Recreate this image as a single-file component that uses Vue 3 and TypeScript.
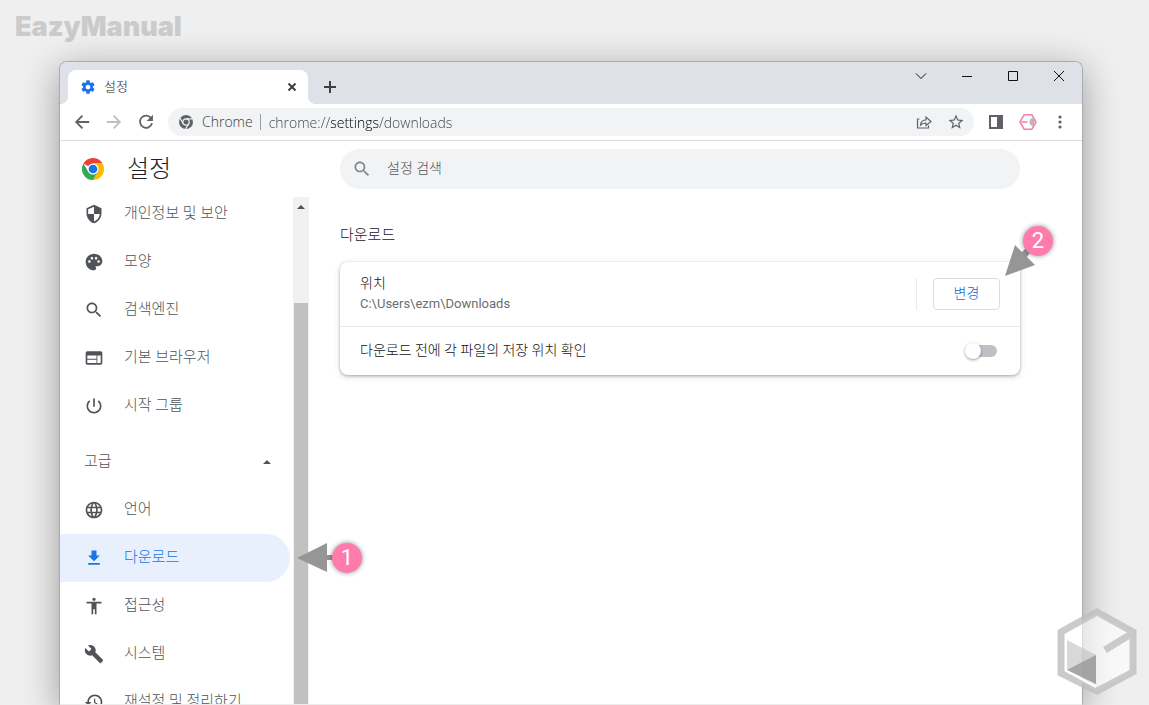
<script setup lang="ts">
import { ref } from 'vue'

interface NavItem {
  label: string
  icon: string
  active?: boolean
}

const basic: NavItem[] = [
  {
    label: '개인정보 및 보안',
    icon: 'M12 1L3 5v6c0 5.55 3.84 10.74 9 12 5.16-1.26 9-6.45 9-12V5l-9-4zm0 10.99h7c-.53 4.12-3.28 7.79-7 8.94V12H5V6.3l7-3.11v8.8z',
  },
  {
    label: '모양',
    icon: 'M12 2C6.49 2 2 6.49 2 12s4.49 10 10 10c1.38 0 2.5-1.12 2.5-2.5 0-.61-.23-1.2-.64-1.67-.08-.1-.13-.21-.13-.33 0-.28.22-.5.5-.5H16c3.31 0 6-2.69 6-6 0-4.96-4.49-9-10-9zm-5.5 11c-.83 0-1.5-.67-1.5-1.5S5.67 10 6.5 10s1.5.67 1.5 1.5S7.33 13 6.5 13zm3-4C8.67 9 8 8.33 8 7.5S8.67 6 9.5 6s1.5.67 1.5 1.5S10.33 9 9.5 9zm5 0c-.83 0-1.5-.67-1.5-1.5S13.67 6 14.5 6s1.5.67 1.5 1.5S15.33 9 14.5 9zm3 4c-.83 0-1.5-.67-1.5-1.5s.67-1.5 1.5-1.5 1.5.67 1.5 1.5-.67 1.5-1.5 1.5z',
  },
  {
    label: '검색엔진',
    icon: 'M15.5 14h-.79l-.28-.27C15.41 12.59 16 11.11 16 9.5 16 5.91 13.09 3 9.5 3S3 5.91 3 9.5 5.91 16 9.5 16c1.61 0 3.09-.59 4.23-1.57l.27.28v.79l5 4.99L20.49 19l-4.99-5zm-6 0C7.01 14 5 11.99 5 9.5S7.01 5 9.5 5 14 7.01 14 9.5 11.99 14 9.5 14z',
  },
  {
    label: '기본 브라우저',
    icon: 'M20 4H4c-1.1 0-1.99.9-1.99 2L2 18c0 1.1.9 2 2 2h16c1.1 0 2-.9 2-2V6c0-1.1-.9-2-2-2zm-5 14H4v-4h11v4zm0-5H4V9h11v4zm5 5h-4V9h4v9z',
  },
  {
    label: '시작 그룹',
    icon: 'M13 3h-2v10h2V3zm4.83 2.17l-1.42 1.42C17.99 7.86 19 9.81 19 12c0 3.87-3.13 7-7 7s-7-3.13-7-7c0-2.19 1.01-4.14 2.58-5.42L6.17 5.17C4.23 6.82 3 9.26 3 12c0 4.97 4.03 9 9 9s9-4.03 9-9c0-2.74-1.23-5.18-3.17-6.83z',
  },
]

const advanced: NavItem[] = [
  {
    label: '언어',
    icon: 'M11.99 2C6.47 2 2 6.48 2 12s4.47 10 9.99 10C17.52 22 22 17.52 22 12S17.52 2 11.99 2zm6.93 6h-2.95c-.32-1.25-.78-2.45-1.38-3.56 1.84.63 3.37 1.91 4.33 3.56zM12 4.04c.83 1.2 1.48 2.53 1.91 3.96h-3.82c.43-1.43 1.08-2.76 1.91-3.96zM4.26 14C4.1 13.36 4 12.69 4 12s.1-1.36.26-2h3.38c-.08.66-.14 1.32-.14 2s.06 1.34.14 2H4.26zm.82 2h2.95c.32 1.25.78 2.45 1.38 3.56-1.84-.63-3.37-1.9-4.33-3.56zm2.95-8H5.08c.96-1.66 2.49-2.93 4.33-3.56C8.81 5.55 8.35 6.75 8.03 8zM12 19.96c-.83-1.2-1.48-2.53-1.91-3.96h3.82c-.43 1.43-1.08 2.76-1.91 3.96zM14.34 14H9.66c-.09-.66-.16-1.32-.16-2s.07-1.35.16-2h4.68c.09.65.16 1.32.16 2s-.07 1.34-.16 2zm.25 5.56c.6-1.11 1.06-2.31 1.38-3.56h2.95c-.96 1.65-2.49 2.93-4.33 3.56zM16.36 14c.08-.66.14-1.32.14-2s-.06-1.34-.14-2h3.38c.16.64.26 1.31.26 2s-.1 1.36-.26 2h-3.38z',
  },
  { label: '다운로드', icon: 'M19 9h-4V3H9v6H5l7 7 7-7zM5 18v2h14v-2H5z', active: true },
  {
    label: '접근성',
    icon: 'M12 2c1.1 0 2 .9 2 2s-.9 2-2 2-2-.9-2-2 .9-2 2-2zm9 7h-6v13h-2v-6h-2v6H9V9H3V7h18v2z',
  },
  {
    label: '시스템',
    icon: 'M22.7 19l-9.1-9.1c.9-2.3.4-5-1.5-6.9-2-2-5-2.4-7.4-1.3L9 6 6 9 1.6 4.7C.4 7.1.9 10.1 2.9 12.1c1.9 1.9 4.6 2.4 6.9 1.5l9.1 9.1c.4.4 1 .4 1.4 0l2.3-2.3c.5-.4.5-1.1.1-1.4z',
  },
  {
    label: '재설정 및 정리하기',
    icon: 'M13 3c-4.97 0-9 4.03-9 9H1l3.89 3.89.07.14L9 12H6c0-3.87 3.13-7 7-7s7 3.13 7 7-3.13 7-7 7c-1.93 0-3.68-.79-4.94-2.06l-1.42 1.42C8.27 19.99 10.51 21 13 21c4.97 0 9-4.03 9-9s-4.03-9-9-9zm-1 5v5l4.28 2.54.72-1.21-3.5-2.08V8H12z',
  },
]

const url = ref('chrome://settings/downloads')
const query = ref('')
const askLocation = ref(false)
const advancedOpen = ref(true)
</script>

<template>
  <div class="page">
    <header class="brand">EazyManual</header>

    <main class="window">
      <div class="tabstrip">
        <div class="tab">
          <svg class="i16 gear" viewBox="0 0 24 24"><path d="M19.43 12.98c.04-.32.07-.64.07-.98s-.03-.66-.07-.98l2.11-1.65c.19-.15.24-.42.12-.64l-2-3.46c-.12-.22-.39-.3-.61-.22l-2.49 1c-.52-.4-1.08-.73-1.69-.98l-.38-2.65C14.46 2.18 14.25 2 14 2h-4c-.25 0-.46.18-.49.42l-.38 2.65c-.61.25-1.17.59-1.69.98l-2.49-1c-.23-.09-.49 0-.61.22l-2 3.46c-.13.22-.07.49.12.64l2.11 1.65c-.04.32-.07.65-.07.98s.03.66.07.98l-2.11 1.65c-.19.15-.24.42-.12.64l2 3.46c.12.22.39.3.61.22l2.49-1c.52.4 1.08.73 1.69.98l.38 2.65c.03.24.24.42.49.42h4c.25 0 .46-.18.49-.42l.38-2.65c.61-.25 1.17-.59 1.69-.98l2.49 1c.23.09.49 0 .61-.22l2-3.46c.12-.22.07-.49-.12-.64l-2.11-1.65zM12 15.500c-1.930 0-3.500-1.570-3.500-3.500s1.570-3.500 3.500-3.500 3.500 1.570 3.500 3.500-1.570 3.500-3.500 3.500z" /></svg>
          <span class="tab-title">설정</span>
          <button class="plain" aria-label="탭 닫기">
            <svg class="i16" viewBox="0 0 16 16"><path class="line dark" d="M4.500 4.500l7 7M11.500 4.500l-7 7" /></svg>
          </button>
        </div>
        <button class="plain new-tab" aria-label="새 탭">
          <svg class="i16" viewBox="0 0 16 16"><path class="line dark" d="M8 2v12M2 8h12" /></svg>
        </button>
        <div class="caption">
          <button aria-label="탭 검색"><svg class="i16" viewBox="0 0 16 16"><path class="thin" d="M3 5.500l5 5 5-5" /></svg></button>
          <button aria-label="최소화"><svg class="i16" viewBox="0 0 16 16"><path class="thin" d="M3 8.500h10" /></svg></button>
          <button aria-label="최대화"><svg class="i16" viewBox="0 0 16 16"><path class="thin" d="M3.500 3.500h9v9h-9z" /></svg></button>
          <button aria-label="닫기"><svg class="i16" viewBox="0 0 16 16"><path class="thin" d="M3 3l10 10M13 3L3 13" /></svg></button>
        </div>
      </div>

      <div class="toolbar">
        <button class="tool" aria-label="뒤로"><svg class="i18" viewBox="0 0 20 20"><path class="line" d="M18 10H4M10.500 3L3.500 10l7 7" /></svg></button>
        <button class="tool off" aria-label="앞으로"><svg class="i18" viewBox="0 0 20 20"><path class="line" d="M2 10h14M9.500 3l7 7-7 7" /></svg></button>
        <button class="tool" aria-label="새로고침"><svg class="i18" viewBox="0 0 20 20"><path class="line" d="M15.800 5.800A6.800 6.800 0 1 0 16.700 11.500" /><path d="M17.700 2v7h-7z" /></svg></button>
        <div class="omnibox">
          <svg class="i16 site" viewBox="0 0 16 16">
            <circle cx="8" cy="8" r="7" />
            <circle class="ring" cx="8" cy="8" r="3.200" />
            <path class="cut" d="M8 4.800h6.500M5.200 9.600L2 4M10.800 9.600L7.500 15" />
          </svg>
          <label class="site-name" for="url">Chrome</label>
          <input id="url" v-model="url" class="url" type="text" spellcheck="false">
          <button class="tool" aria-label="공유"><svg class="i16" viewBox="0 0 16 16"><path class="fine" d="M3.500 5H1.500v9h11v-2.500M4.500 11c.4-3.500 2.300-5 5.500-5V3l5 4.500-5 4V9C7.500 9 6 9.500 4.500 11z" /></svg></button>
          <button class="tool" aria-label="북마크"><svg class="i18" viewBox="0 0 24 24"><path d="M22 9.240l-7.190-.62L12 2 9.190 8.630 2 9.240l5.460 4.730L5.820 21 12 17.270 18.180 21l-1.630-7.030L22 9.240zM12 15.400l-3.760 2.270 1-4.280-3.320-2.880 4.380-.38L12 6.100l1.710 4.040 4.380.38-3.320 2.880 1 4.280L12 15.400z" /></svg></button>
        </div>
        <button class="tool" aria-label="측면 패널"><svg class="i16" viewBox="0 0 16 16"><path d="M1 1h14v14H1zM3 3v10h6V3z" fill-rule="evenodd" /></svg></button>
        <button class="tool" aria-label="확장 프로그램">
          <svg class="i18" viewBox="0 0 18 18"><path class="half" d="M13.500 5a4 4 0 0 0-3 4c0 2 1.200 3.500 3 4 1.300-1 1.800-2.500 1.800-4s-.5-3-1.800-4z" /><path class="pink" d="M5.200 1.700h7.600L17 9l-4.200 7.300H5.200L1 9z" /><path class="pink" d="M2.500 9h6" /></svg>
        </button>
        <button class="tool" aria-label="메뉴"><svg class="i16" viewBox="0 0 16 16"><circle cx="8" cy="3" r="1.600" /><circle cx="8" cy="8" r="1.600" /><circle cx="8" cy="13" r="1.600" /></svg></button>
      </div>

      <div class="settings">
        <aside class="side">
          <div class="side-head">
            <svg class="logo" viewBox="0 0 48 48">
              <path fill="#ea4335" d="M24 24L3.200 12A24 24 0 0 1 44.800 12H24z" />
              <path fill="#fbbc05" d="M24 24l10.400 6L24 48A24 24 0 0 0 44.800 12H24z" />
              <path fill="#34a853" d="M3.200 12A24 24 0 0 0 24 48l10.400-18L24 34l-10.400-4z" />
              <circle cx="24" cy="24" r="12" fill="#fff" />
              <circle cx="24" cy="24" r="9.500" fill="#1a73e8" />
            </svg>
            <h1>설정</h1>
          </div>
          <div class="side-body">
            <nav class="menu">
              <a v-for="item in basic" :key="item.label" href="#" class="item">
                <svg class="i20" viewBox="0 0 24 24"><path :d="item.icon" /></svg>
                <span>{{ item.label }}</span>
              </a>
              <button class="group" :aria-expanded="advancedOpen" @click="advancedOpen = !advancedOpen">
                <span>고급</span>
                <i class="caret"></i>
              </button>
              <template v-if="advancedOpen">
                <a
                  v-for="item in advanced"
                  :key="item.label"
                  href="#"
                  class="item"
                  :class="{ active: item.active }"
                >
                  <svg class="i20" viewBox="0 0 24 24"><path :d="item.icon" /></svg>
                  <span>{{ item.label }}</span>
                </a>
              </template>
            </nav>
            <div class="scrollbar"><i class="caret"></i><div class="thumb"></div></div>
          </div>
        </aside>

        <section class="content">
          <label class="search">
            <svg class="i20" viewBox="0 0 24 24"><path :d="basic[2].icon" /></svg>
            <input v-model="query" type="search" placeholder="설정 검색" aria-label="설정 검색">
          </label>
          <h2>다운로드</h2>
          <div class="card">
            <div class="row location">
              <div class="text">
                <div>위치</div>
                <div class="path">C:\Users\ezm\Downloads</div>
              </div>
              <div class="action"><button class="change">변경</button></div>
            </div>
            <div class="row ask">
              <label for="ask">다운로드 전에 각 파일의 저장 위치 확인</label>
              <input id="ask" v-model="askLocation" class="toggle" type="checkbox" role="switch">
            </div>
            <div class="mark two">
              <svg viewBox="0 0 40 40"><path d="M1 39L11 8l7 7 6-6 4 4-5 7 8 8z" /></svg>
              <span>2</span>
            </div>
          </div>
        </section>
      </div>
      <div class="mark one">
        <svg viewBox="0 0 40 30"><path d="M0 15L30 0v12h8v5h-8v12z" /></svg>
        <span>1</span>
      </div>
    </main>

    <svg class="cube" viewBox="0 0 80 88">
      <path class="face" d="M40 5L76 24v40L40 83 4 64V24z" />
      <path class="edge" d="M40 4L76 24v40L40 83 4 65V24zM74 26L48 42" />
      <path class="shade" d="M10 32l29 15v29L10 62z" />
      <path class="deep" d="M10 62l29-15v29z" />
      <path class="shine" d="M9 27v36l30 16" />
    </svg>
  </div>
</template>

<style>
body {
  margin: 0;
}
</style>

<style scoped>
.page {
  position: relative;
  display: flex;
  flex-direction: column;
  height: 100vh;
  overflow: hidden;
  background: #efefef;
  color: #202124;
  font: 14px/20px Roboto, "Noto Sans CJK KR", sans-serif;
}
.page * {
  box-sizing: border-box;
}
button,
input {
  margin: 0;
  padding: 0;
  border: 0;
  background: none;
  font: inherit;
  color: inherit;
  outline: none;
}
svg {
  display: block;
  flex: none;
  fill: currentColor;
}
.i16 { width: 16px; height: 16px; }
.i18 { width: 18px; height: 18px; }
.i20 { width: 20px; height: 20px; }

.brand {
  flex: none;
  height: 61px;
  padding: 12px 15px;
  font: 900 27px/30px Inter, sans-serif;
  color: #cbcbcb;
}

.window {
  position: relative;
  display: flex;
  flex: 1;
  flex-direction: column;
  min-height: 0;
  margin: 0 66px 0 59px;
  border: 1px solid #a9abad;
  border-bottom-color: #ececec;
  border-radius: 8px 8px 0 0;
  background: #fff;
  box-shadow: 0 8px 36px rgba(0, 0, 0, 0.36);
}

.tabstrip {
  display: flex;
  flex: none;
  height: 42px;
  padding-left: 8px;
  border-radius: 7px 7px 0 0;
  background: #dee1e7;
}
.tab {
  position: relative;
  display: flex;
  align-items: center;
  width: 240px;
  height: 34px;
  margin-top: 8px;
  padding: 0 8px 0 12px;
  border-radius: 8px 8px 0 0;
  background: #fff;
}
.tab::before,
.tab::after {
  position: absolute;
  bottom: 0;
  width: 8px;
  height: 8px;
  content: "";
}
.tab::before {
  right: 100%;
  background: radial-gradient(circle at 0 0, transparent 8px, #fff 8px);
}
.tab::after {
  left: 100%;
  background: radial-gradient(circle at 100% 0, transparent 8px, #fff 8px);
}
.gear {
  color: #1a73e8;
}
.tab-title {
  flex: 1;
  padding-left: 8px;
  font-size: 13px;
  font-weight: 300;
}
.plain {
  display: grid;
  place-items: center;
  width: 16px;
}
.new-tab {
  height: 34px;
  margin: 8px 0 0 14px;
}
.caption {
  display: flex;
  margin-left: auto;
}
.caption button {
  display: grid;
  place-items: center;
  width: 46px;
  height: 28px;
}
.line,
.thin,
.fine,
.pink {
  fill: none;
  stroke: currentColor;
}
.line { stroke-width: 2; }
.dark { stroke: #3c4043; }
.thin { stroke: #111; }
.fine { stroke-width: 1.2; }
.pink { stroke: #f382a5; stroke-width: 1.6; }
.half { fill: #b8b8b8; }

.toolbar {
  display: flex;
  flex: none;
  align-items: center;
  height: 37px;
  padding: 0 6px;
  border-bottom: 1px solid #dadce0;
  color: #5f6368;
}
.tool {
  display: grid;
  flex: none;
  place-items: center;
  width: 32px;
  height: 28px;
}
.off {
  color: #bdbfc2;
}
.omnibox {
  display: flex;
  flex: 1;
  align-items: center;
  height: 28px;
  margin: 0 6px;
  padding: 0 2px 0 10px;
  border-radius: 14px;
  background: #f1f3f4;
  font: 300 14px/20px "Open Sans", sans-serif;
}
.ring {
  fill: currentColor;
  stroke: #f1f3f4;
  stroke-width: 1.2;
}
.cut {
  fill: none;
  stroke: #f1f3f4;
  stroke-width: 1.2;
}
.site-name {
  padding: 0 7px 0 8px;
  border-right: 1px solid #9aa0a6;
  color: #3c4043;
  line-height: 16px;
}
.url {
  flex: 1;
  min-width: 0;
  height: 22px;
  margin-left: 8px;
  background: linear-gradient(90deg, #3c4043 61px, #000 61px, #000 110px, #3c4043 110px);
  -webkit-background-clip: text;
  background-clip: text;
  color: transparent;
}

.settings {
  display: flex;
  flex: 1;
  min-height: 0;
}
.side {
  display: flex;
  flex: none;
  flex-direction: column;
  width: 249px;
}
.side-head {
  display: flex;
  flex: none;
  align-items: center;
  gap: 23px;
  height: 56px;
  padding: 0 22px;
}
.logo {
  width: 22px;
  height: 22px;
}
h1 {
  margin: 0;
  font-size: 24px;
  font-weight: 300;
  line-height: 36px;
}
.side-body {
  display: flex;
  flex: 1;
  min-height: 0;
  overflow: hidden;
}
.menu {
  flex: 1;
  margin-top: -7px;
  color: #505458;
  font-size: 15px;
  font-weight: 300;
}
.item {
  display: flex;
  align-items: center;
  gap: 20px;
  height: 48px;
  margin-right: 3px;
  padding-left: 24px;
  border-radius: 0 24px 24px 0;
  color: inherit;
  text-decoration: none;
}
.item span,
.group span {
  padding-bottom: 2px;
}
.active {
  background: #e8f0fe;
  color: #1a73e8;
}
.group {
  display: flex;
  align-items: center;
  justify-content: space-between;
  width: 100%;
  height: 48px;
  margin-top: 8px;
  padding: 0 22px 0 24px;
}
.caret {
  border: 4px solid transparent;
  border-top: 0;
  border-bottom-color: currentColor;
}
.scrollbar {
  display: flex;
  flex: none;
  flex-direction: column;
  align-items: center;
  width: 16px;
  padding-top: 8px;
  background: #f1f1f1;
  color: #505050;
}
.thumb {
  flex: 1;
  width: 14px;
  margin-top: 94px;
  background: #c1c1c1;
}

.content {
  flex: 1;
  min-width: 0;
  padding: 8px 62px 0 31px;
}
.search {
  display: flex;
  align-items: center;
  gap: 15px;
  height: 40px;
  padding: 0 12px;
  border-radius: 20px;
  background: #f1f3f4;
  color: #80868b;
}
.search input {
  flex: 1;
  padding-bottom: 2px;
  font-weight: 300;
  color: #202124;
  appearance: none;
}
.search input::placeholder {
  color: #505458;
}
h2 {
  margin: 35px 0 16px;
  font-size: 15px;
  font-weight: 300;
  line-height: 22px;
}
.card {
  position: relative;
  border-radius: 8px;
  background: #fff;
  box-shadow: 0 1px 3px rgba(60, 64, 67, 0.4), 0 2px 6px rgba(60, 64, 67, 0.15);
  color: #111;
  font-weight: 300;
}
.row {
  display: flex;
  align-items: center;
  justify-content: space-between;
  padding: 0 20px;
}
.location {
  height: 65px;
  border-bottom: 1px solid #e8eaed;
}
.ask {
  height: 48px;
}
.ask label {
  padding-bottom: 2px;
}
.path {
  font-size: 13px;
  font-weight: 400;
  line-height: 22px;
  color: #6a6e73;
}
.action {
  padding-left: 16px;
  border-left: 1px solid #e8eaed;
}
.change {
  display: block;
  width: 67px;
  height: 32px;
  padding-bottom: 2px;
  border: 1px solid #dadce0;
  border-radius: 4px;
  color: #1967d2;
}
.toggle {
  position: relative;
  width: 28px;
  height: 12px;
  margin-right: 3px;
  border-radius: 6px;
  background: #bdc1c6;
  appearance: none;
}
.toggle::before {
  position: absolute;
  top: -2px;
  left: -4px;
  width: 16px;
  height: 16px;
  border-radius: 50%;
  background: #fff;
  box-shadow: 0 1px 3px rgba(0, 0, 0, 0.4);
  content: "";
}
.toggle:checked::before {
  left: 16px;
}

.mark {
  position: absolute;
  color: #969696;
}
.mark span {
  position: absolute;
  width: 30px;
  height: 30px;
  border-radius: 50%;
  background: #ff7bac;
  box-shadow: 0 0 5px rgba(0, 0, 0, 0.45);
  color: #fff;
  font: 22px/30px Roboto, sans-serif;
  text-align: center;
}
.one {
  top: 481px;
  left: 237px;
}
.one svg {
  width: 40px;
  height: 30px;
}
.one span {
  top: 0;
  left: 35px;
}
.two {
  top: -25px;
  right: -24px;
}
.two svg {
  width: 40px;
  height: 40px;
}
.two span {
  top: -11px;
  left: 19px;
}

.cube {
  position: absolute;
  right: 12px;
  bottom: 9px;
  width: 80px;
  height: 88px;
}
.face { fill: rgba(255, 255, 255, 0.6); }
.edge {
  fill: none;
  stroke: rgba(190, 190, 190, 0.8);
  stroke-width: 7;
}
.shade { fill: rgba(190, 190, 190, 0.6); }
.deep { fill: rgba(140, 140, 140, 0.65); }
.shine {
  fill: none;
  stroke: #fff;
  stroke-width: 2;
}
</style>
